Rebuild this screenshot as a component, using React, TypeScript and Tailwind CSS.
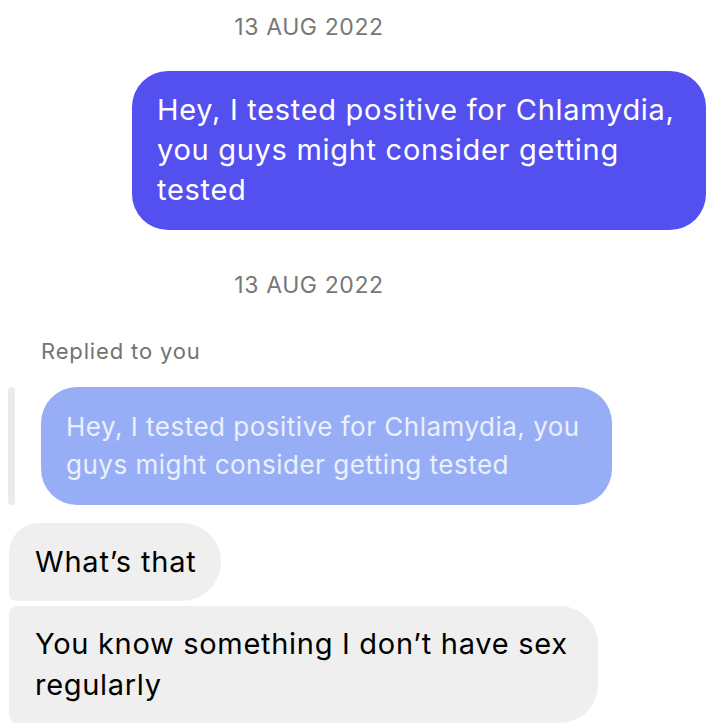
import React from "react";

export default function App() {
  const font = { fontFamily: "Inter, 'Noto Sans', sans-serif" };
  return (
    <div className="w-[720px] h-[727px] bg-white overflow-hidden" style={font}>
      <div className="flex flex-col">
        <div className="w-[618px] text-center text-[23px] tracking-[0.6px] leading-[28px] text-[#777777] pt-[13px]">
          13 AUG 2022
        </div>
        <div className="flex justify-end pr-[14px] mt-[30px]">
          <div className="w-[574px] h-[159px] bg-[#5450F0] rounded-[36px] pl-[25px] pr-[20px] pt-[19px] text-white text-[29px] tracking-[0.7px] leading-[40px]">
            Hey, I tested positive for Chlamydia, you guys might consider getting tested
          </div>
        </div>
        <div className="w-[618px] text-center text-[23px] tracking-[0.6px] leading-[28px] text-[#777777] mt-[41px]">
          13 AUG 2022
        </div>
        <div className="pl-[41px] mt-[38px] text-[22px] tracking-[0.85px] leading-[28px] text-[#737373]">
          Replied to you
        </div>
        <div className="flex mt-[22px] gap-[26px] pl-[8px]">
          <div className="w-[7px] h-[118px] bg-[#EBEBEB] rounded-full" />
          <div className="w-[571px] h-[118px] bg-[#97AEF6] rounded-[36px] pl-[25px] pr-[20px] pt-[21px] text-[#EBF0FD] text-[26px] tracking-[0.5px] leading-[38px]">
            Hey, I tested positive for Chlamydia, you guys might consider getting tested
          </div>
        </div>
        <div className="flex flex-col gap-[5px] pl-[9px] mt-[18px]">
          <div className="w-[212px] h-[78px] bg-[#EFEFEF] rounded-tl-[30px] rounded-bl-[8px] rounded-r-[39px] pl-[26px] pt-[19px] text-black text-[29px] tracking-[0.8px] leading-[40px]">
            What’s that
          </div>
          <div className="w-[589px] h-[117px] bg-[#EFEFEF] rounded-l-[8px] rounded-r-[38px] pl-[26px] pr-[20px] pt-[17px] text-black text-[29px] tracking-[0.7px] leading-[41px]">
            You know something I don’t have sex regularly
          </div>
        </div>
      </div>
    </div>
  );
}
